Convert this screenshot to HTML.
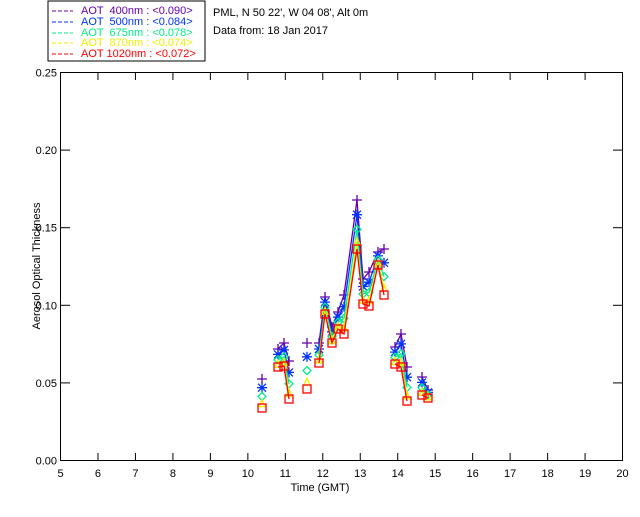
<!DOCTYPE html>
<html><head><meta charset="utf-8"><style>
body{margin:0;background:#fff;width:640px;height:512px;overflow:hidden;font-family:"Liberation Sans",sans-serif}
svg text{font-family:"Liberation Sans",sans-serif;font-size:11px}
</style></head><body>
<svg id="s" width="640" height="512" xmlns="http://www.w3.org/2000/svg">
<rect x="48" y="1" width="157" height="60" fill="none" stroke="#000" stroke-width="1"/>
<g font-size="11">
<line x1="52" y1="11" x2="73" y2="11" stroke="#6600aa" stroke-dasharray="4,2"/><text x="81" y="14" fill="#6600aa" xml:space="preserve">AOT  400nm : &lt;0.090&gt;</text>
<line x1="52" y1="22" x2="73" y2="22" stroke="#0033ff" stroke-dasharray="4,2"/><text x="81" y="25" fill="#0033ff" xml:space="preserve">AOT  500nm : &lt;0.084&gt;</text>
<line x1="52" y1="33" x2="73" y2="33" stroke="#00ee88" stroke-dasharray="4,2"/><text x="81" y="36" fill="#00ee88" xml:space="preserve">AOT  675nm : &lt;0.078&gt;</text>
<line x1="52" y1="43" x2="73" y2="43" stroke="#eeee00" stroke-dasharray="4,2"/><text x="81" y="46" fill="#eeee00" xml:space="preserve">AOT  870nm : &lt;0.074&gt;</text>
<line x1="52" y1="54" x2="73" y2="54" stroke="#ff0000" stroke-dasharray="4,2"/><text x="81" y="57" fill="#ff0000" xml:space="preserve">AOT 1020nm : &lt;0.072&gt;</text>
</g>
<text x="213" y="16">PML, N 50 22', W 04 08', Alt 0m</text>
<text x="213" y="34">Data from: 18 Jan 2017</text>
<rect x="60.5" y="72.5" width="562" height="388" fill="none" stroke="#000"/>
<g id="ax"></g>
<text x="320" y="491" text-anchor="middle">Time (GMT)</text>
<text transform="translate(40,266) rotate(-90)" text-anchor="middle">Aerosol Optical Thickness</text>
<g id="d"></g>
</svg>
<script>
var NS="http://www.w3.org/2000/svg";
function el(p,t,a){var e=document.createElementNS(NS,t);for(var k in a)e.setAttribute(k,a[k]);p.appendChild(e);return e;}
var ax=document.getElementById('ax');
for(var h=5;h<=20;h++){var x=60.5+(h-5)*37.47;
 if(h>5&&h<20){el(ax,'line',{x1:x,y1:460,x2:x,y2:453,stroke:'#000'});el(ax,'line',{x1:x,y1:73,x2:x,y2:80,stroke:'#000'});}
 var t=el(ax,'text',{x:x,y:477,'text-anchor':'middle'});t.textContent=h;}
for(var i=0;i<=5;i++){var v=i*0.05,y=460.5-v*1552;
 if(i>0&&i<5){el(ax,'line',{x1:61,y1:y,x2:70,y2:y,stroke:'#000'});el(ax,'line',{x1:622,y1:y,x2:613,y2:y,stroke:'#000'});}
 var t=el(ax,'text',{x:57,y:y+4,'text-anchor':'end'});t.textContent=v.toFixed(2);}
var X=[262,278,284,289,307,319,325,332,338,344,357,363,369,378,384,395,401,407,422,428];
var P=[379,349,343,361,343,343,297,327,312,295,200,279,272,252,249,347,334,367,377,390];
var R=[408,367,366,399,389,363,314,343,329,334,249,304,306,265,295,364,367,401,395,398];
var segs=[[0],[1,2,3],[4],[5,6,7,8,9,10,11,12,13,14],[15,16,17],[18,19]];
var S=[{c:'#6600aa',f:0,m:'+'},{c:'#0033ff',f:0.3,m:'*'},{c:'#00ee88',f:0.6,m:'d'},{c:'#eeee00',f:0.85,m:'t'},{c:'#ff0000',f:1,m:'s'}];
var d=document.getElementById('d');
S.forEach(function(s){
 var Y=P.map(function(p,i){return p+s.f*(R[i]-p);});
 segs.forEach(function(sg){if(sg.length>1){el(d,'polyline',{points:sg.map(function(i){return X[i]+','+Y[i];}).join(' '),fill:'none',stroke:s.c,'stroke-width':1.3});}});
 X.forEach(function(x,i){var y=Y[i],a={stroke:s.c,fill:'none','stroke-width':1.3};
  if(s.m=='+'){el(d,'path',Object.assign({d:'M'+(x-5)+' '+y+'h10M'+x+' '+(y-5)+'v10'},a));}
  else if(s.m=='*'){el(d,'path',Object.assign({d:'M'+(x-5)+' '+y+'h10M'+x+' '+(y-5)+'v10M'+(x-4)+' '+(y-4)+'l8 8M'+(x-4)+' '+(y+4)+'l8 -8','stroke-width':1.8},a));}
  else if(s.m=='d'){el(d,'path',Object.assign({d:'M'+x+' '+(y-4)+'l4 4l-4 4l-4 -4z'},a));}
  else if(s.m=='t'){el(d,'path',Object.assign({d:'M'+x+' '+(y-4)+'l3 7h-6z'},a));}
  else {el(d,'rect',Object.assign({x:x-4,y:y-4,width:8,height:8},a));}
 });
});
</script>
</body></html>
